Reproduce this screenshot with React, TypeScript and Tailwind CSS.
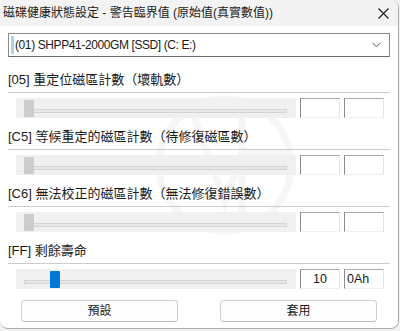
import React from "react";

const F = "font-['Liberation_Sans','Noto_Sans_CJK_TC',sans-serif]";

function Section({ label, thumbLeft, blue, v1, v2 }: { label: string; thumbLeft: number; blue?: boolean; v1?: string; v2?: string }) {
  return (
    <div className="mb-[11px]">
      <div className="h-[16px] leading-[16px] text-[13px] text-[#1a1a1a] whitespace-nowrap">{label}</div>
      <div className="mt-[4px] h-px bg-[#cdcdcd]" />
      <div className="mt-[5px] flex h-[20px]">
        <div className="relative ml-[8px] w-[280px] h-[20px] bg-[#f0f0f0] pl-[8px] pr-[9px] pt-[11px]">
          <div className="h-[4px] bg-[#e6e6e6] border border-[#d4d4d4]" />
          <div
            className={"absolute top-[2px] w-[10px] h-[17px] rounded-[1px] " + (blue ? "bg-[#0078d7]" : "bg-[#cccccc]")}
            style={{ left: thumbLeft }}
          />
        </div>
        <div className="ml-[4px] w-[40px] h-[20px] bg-white border border-l-[#8a8a8a] border-t-[#a8a8a8] border-r-[#e3e3e3] border-b-[#f0f0f0] text-[12.5px] leading-[18px] text-center text-[#1a1a1a]">
          {v1}
        </div>
        <div className="ml-[4px] w-[40px] h-[20px] bg-white border border-l-[#8a8a8a] border-t-[#a8a8a8] border-r-[#e3e3e3] border-b-[#f0f0f0] text-[12.5px] leading-[18px] pl-[2px] text-left text-[#1a1a1a]">
          {v2}
        </div>
      </div>
    </div>
  );
}

export default function App() {
  return (
    <div className={"w-[400px] h-[331px] bg-[#f2f2f2] overflow-hidden " + F}>
      <div className="relative w-[399px] h-[329px] bg-white border-r border-b border-[#ababab] rounded-tr-[8px] rounded-b-[8px] overflow-hidden">
        <svg className="absolute left-[150px] top-[92px] pointer-events-none" width="150" height="150" viewBox="0 0 150 150">
          <g fill="none" stroke="#f6f6f6" strokeWidth="7">
            <circle cx="75" cy="73" r="66" />
            <path d="M40 14 L75 110 L92 60" />
            <path d="M92 14 L92 136" />
            <path d="M92 60 L140 60" />
          </g>
        </svg>
        <div className="relative h-[26px] bg-[#f3f3f3] flex items-center justify-between pl-[3px] pr-[9px]">
          <span className="text-[12px] text-[#1a1a1a] whitespace-nowrap leading-[16px]">磁碟健康狀態設定 - 警告臨界值 (原始值(真實數值))</span>
          <svg width="11" height="11" viewBox="0 0 11 11">
            <path d="M0.5 0.5 L10.5 10.5 M10.5 0.5 L0.5 10.5" stroke="#1a1a1a" strokeWidth="1.1" />
          </svg>
        </div>
        <div className="relative px-[8px]">
          <div className="mt-[7px] h-[24px] border border-[#8a8a8a] border-b-[#6a6a6a] bg-white flex items-center pl-[2px] pr-[8px] rounded-[1px]">
            <div className="w-[3px] h-[18px] bg-[#a9d3f0]" />
            <span className="ml-[1px] text-[12px] tracking-[-0.4px] text-[#1a1a1a] leading-[16px] whitespace-nowrap flex-1">(01) SHPP41-2000GM [SSD] (C: E:)</span>
            <svg width="9" height="6" viewBox="0 0 9 6">
              <path d="M0.5 0.8 L4.5 4.8 L8.5 0.8" fill="none" stroke="#555" strokeWidth="1" />
            </svg>
          </div>
          <div className="mt-[15px]">
            <Section label="[05] 重定位磁區計數（壞軌數）" thumbLeft={8} />
            <Section label="[C5] 等候重定的磁區計數（待修復磁區數）" thumbLeft={8} />
            <Section label="[C6] 無法校正的磁區計數（無法修復錯誤數）" thumbLeft={8} />
            <Section label="[FF] 剩餘壽命" thumbLeft={34} blue v1="10" v2="0Ah" />
          </div>
        </div>
        <div className="relative mt-[2px] flex justify-between px-[21px]">
          <button className="w-[157px] h-[22px] rounded-[4px] border border-[#d0d0d0] border-b-[#bdbdbd] bg-[#fdfdfd] text-[12px] text-[#1a1a1a] leading-[16px]">預設</button>
          <button className="w-[157px] h-[22px] rounded-[4px] border border-[#d0d0d0] border-b-[#bdbdbd] bg-[#fdfdfd] text-[12px] text-[#1a1a1a] leading-[16px]">套用</button>
        </div>
      </div>
    </div>
  );
}
